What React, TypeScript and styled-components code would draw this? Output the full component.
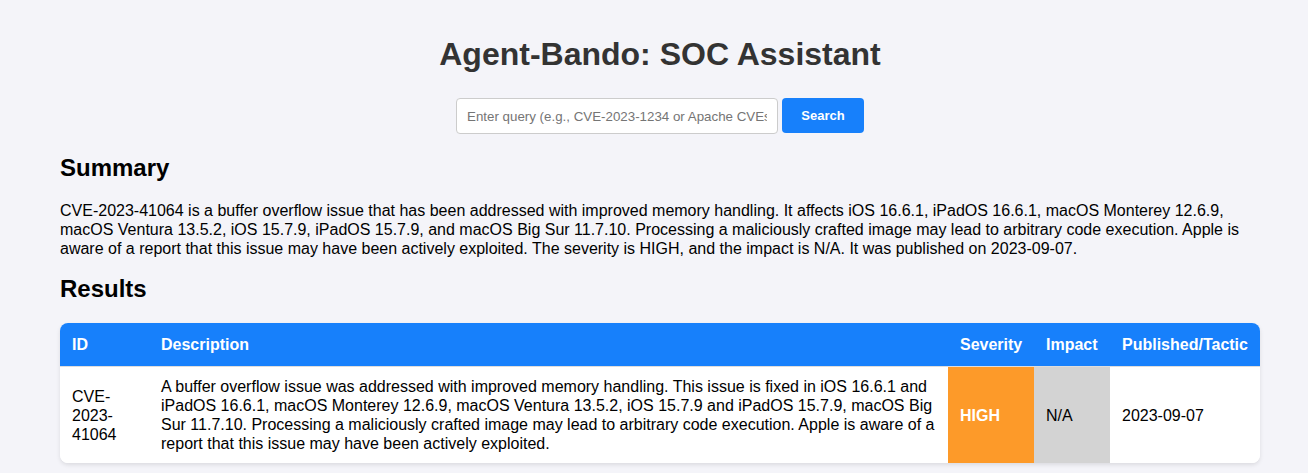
import React from "react";
import styled, { createGlobalStyle } from "styled-components";

const Global = createGlobalStyle`
  html, body { margin: 0; padding: 0; }
  body {
    background: #f4f4f9;
    font-family: "Liberation Sans", Arial, sans-serif;
    color: #000;
  }
`;

const Page = styled.div`
  width: 1200px;
  margin-left: 60px;
  padding-top: 36px;
  padding-bottom: 20px;
`;

const Title = styled.h1`
  margin: 0;
  text-align: center;
  font-size: 32px;
  font-weight: 700;
  color: #333;
  line-height: 37px;
`;

const SearchRow = styled.form`
  display: flex;
  justify-content: center;
  gap: 4px;
  margin-top: 25px;
`;

const QueryInput = styled.input`
  box-sizing: border-box;
  width: 322px;
  height: 36px;
  padding: 0 10px;
  border: 1px solid #ccc;
  border-radius: 4px;
  background: #fff;
  font-family: "Liberation Sans", Arial, sans-serif;
  font-size: 13.33px;
  color: #333;
  &::placeholder { color: #757575; }
`;

const SearchButton = styled.button`
  box-sizing: border-box;
  width: 82px;
  height: 35px;
  border: none;
  border-radius: 4px;
  background: #1780fb;
  color: #fff;
  font-family: "Liberation Sans", Arial, sans-serif;
  font-size: 13px;
  font-weight: 600;
  cursor: pointer;
`;

const SectionTitle = styled.h2<{ $top: number }>`
  margin: ${(p) => p.$top}px 0 0;
  font-size: 24px;
  font-weight: 700;
  line-height: 28px;
`;

const Summary = styled.p`
  margin: 19px 0 0;
  font-size: 16px;
  line-height: 19px;
`;

const TableCard = styled.div`
  margin-top: 20px;
  border-radius: 8px;
  overflow: hidden;
  background: #fff;
  box-shadow: 0 2px 4px rgba(0, 0, 0, 0.1);
`;

const Table = styled.table`
  width: 100%;
  table-layout: fixed;
  border-collapse: collapse;
  font-size: 16px;
  line-height: 19px;
`;

const Th = styled.th<{ $w?: number }>`
  box-sizing: border-box;
  background: #1780fb;
  color: #fff;
  font-weight: 700;
  text-align: left;
  white-space: nowrap;
  padding: 12px;
  border-bottom: 1px solid #ddd;
  width: ${(p) => (p.$w ? `${p.$w}px` : "auto")};
`;

const Td = styled.td<{ $bg?: string; $fg?: string; $bold?: boolean }>`
  padding: 10px 12px;
  vertical-align: middle;
  text-align: left;
  background: ${(p) => p.$bg || "#fff"};
  color: ${(p) => p.$fg || "#000"};
  font-weight: ${(p) => (p.$bold ? 700 : 400)};
`;

export default function App() {
  return (
    <>
      <Global />
      <Page>
        <Title>Agent-Bando: SOC Assistant</Title>
        <SearchRow onSubmit={(e) => e.preventDefault()}>
          <QueryInput placeholder="Enter query (e.g., CVE-2023-1234 or Apache CVEs)" />
          <SearchButton type="submit">Search</SearchButton>
        </SearchRow>
        <SectionTitle $top={20}>Summary</SectionTitle>
        <Summary>
          CVE-2023-41064 is a buffer overflow issue that has been addressed with improved memory handling. It
          affects iOS 16.6.1, iPadOS 16.6.1, macOS Monterey 12.6.9, macOS Ventura 13.5.2, iOS 15.7.9, iPadOS
          15.7.9, and macOS Big Sur 11.7.10. Processing a maliciously crafted image may lead to arbitrary code
          execution. Apple is aware of a report that this issue may have been actively exploited. The severity
          is HIGH, and the impact is N/A. It was published on 2023-09-07.
        </Summary>
        <SectionTitle $top={17}>Results</SectionTitle>
        <TableCard>
          <Table>
            <thead>
              <tr>
                <Th $w={89}>ID</Th>
                <Th>Description</Th>
                <Th $w={86}>Severity</Th>
                <Th $w={76}>Impact</Th>
                <Th $w={150}>Published/Tactic</Th>
              </tr>
            </thead>
            <tbody>
              <tr>
                <Td>CVE-2023-41064</Td>
                <Td>
                  A buffer overflow issue was addressed with improved memory handling. This issue is fixed in iOS
                  16.6.1 and iPadOS 16.6.1, macOS Monterey 12.6.9, macOS Ventura 13.5.2, iOS 15.7.9 and iPadOS
                  15.7.9, macOS Big Sur 11.7.10. Processing a maliciously crafted image may lead to arbitrary code
                  execution. Apple is aware of a report that this issue may have been actively exploited.
                </Td>
                <Td $bg="#fd9a29" $fg="#fff" $bold>
                  HIGH
                </Td>
                <Td $bg="#d3d3d3">N/A</Td>
                <Td>2023-09-07</Td>
              </tr>
            </tbody>
          </Table>
        </TableCard>
      </Page>
    </>
  );
}
